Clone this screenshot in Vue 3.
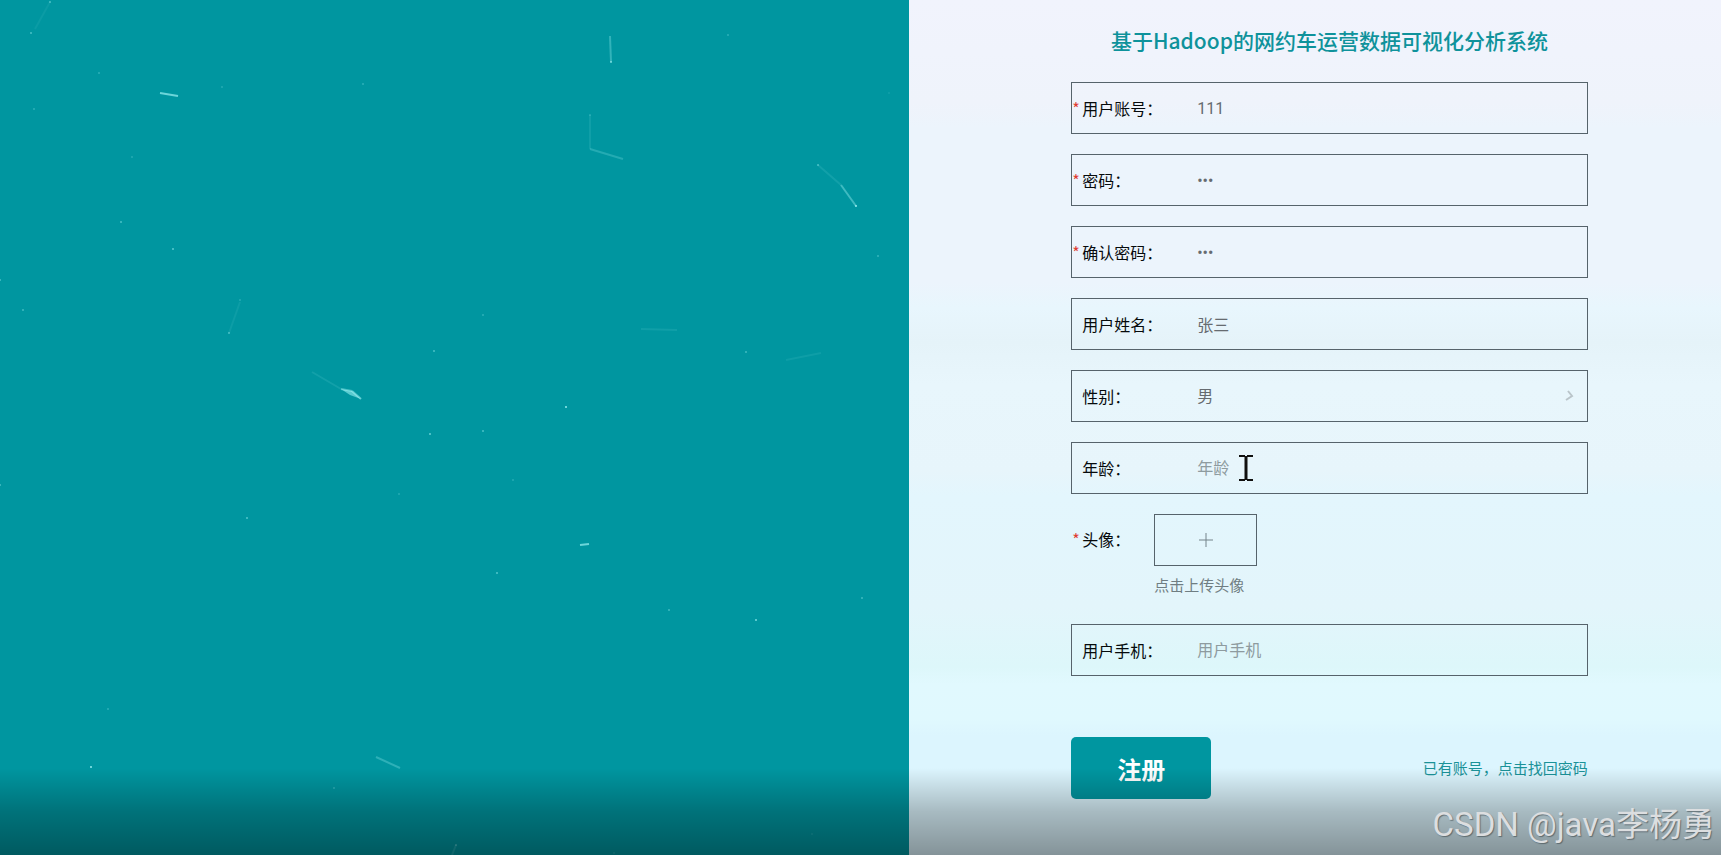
<script setup>
import { ref } from 'vue'

const fields = ref([
  { id: 'account', label: '用户账号', type: 'text', required: true, value: '111' },
  { id: 'password', label: '密码', type: 'password', required: true, value: '111' },
  { id: 'password2', label: '确认密码', type: 'password', required: true, value: '111' },
  { id: 'realname', label: '用户姓名', type: 'text', required: false, value: '张三' },
  { id: 'gender', label: '性别', type: 'select', required: false, value: '男', options: ['男', '女'] },
  { id: 'age', label: '年龄', type: 'text', required: false, value: '' },
  { id: 'avatar', label: '头像', type: 'upload', required: true, value: '' },
  { id: 'phone', label: '用户手机', type: 'text', required: false, value: '' }
])

// [x, y, opacity]
const dots = [
  [50, 2, 0.4], [31, 33, 0.4], [99, 73, 0.25], [34, 109, 0.25], [222, 87, 0.2], [363, 84, 0.25],
  [132, 157, 0.2], [121, 222, 0.4], [173, 249, 0.5], [0, 280, 0.4], [23, 310, 0.35], [229, 333, 0.4],
  [240, 300, 0.2], [434, 351, 0.4], [728, 35, 0.25], [611, 62, 0.6], [818, 165, 0.4], [856, 206, 0.8],
  [878, 256, 0.3], [483, 315, 0.25], [746, 352, 0.35], [566, 407, 0.8], [889, 93, 0.1], [590, 115, 0.2],
  [430, 434, 0.55], [0, 485, 0.4], [247, 518, 0.45], [399, 494, 0.2], [108, 709, 0.25], [91, 767, 0.8],
  [334, 788, 0.25], [456, 845, 0.35], [483, 431, 0.4], [513, 480, 0.2], [497, 573, 0.45], [669, 610, 0.35],
  [756, 620, 0.65], [862, 598, 0.35], [812, 834, 0.12], [614, 853, 0.15]
]

// [x1, y1, x2, y2, opacity]
const lines = [
  [50, 2, 35, 29, 0.06], [160, 93, 178, 96, 0.6], [240, 302, 229, 333, 0.07], [312, 372, 341, 389, 0.1],
  [610, 36, 611, 62, 0.28], [590, 115, 590, 149, 0.09], [590, 149, 623, 159, 0.2], [818, 165, 841, 185, 0.1],
  [841, 185, 856, 206, 0.35], [641, 329, 677, 330, 0.09], [786, 360, 821, 353, 0.08], [376, 757, 400, 768, 0.25],
  [580, 545, 589, 544, 0.6], [456, 845, 452, 855, 0.15], [341, 389, 352, 391, 0.4], [352, 391, 361, 399, 0.5]
]
</script>

<template>
  <main class="page">
    <section class="banner" aria-hidden="true">
      <svg class="particles" viewBox="0 0 910 855" preserveAspectRatio="xMinYMin slice">
        <line v-for="(l, i) in lines" :key="'l' + i" :x1="l[0]" :y1="l[1]" :x2="l[2]" :y2="l[3]" :stroke-opacity="l[4]" />
        <circle v-for="(d, i) in dots" :key="'d' + i" :cx="d[0]" :cy="d[1]" r="1" :fill-opacity="d[2]" />
        <path d="M341 389 L352 391 L361 399 L350 395 Z" fill-opacity="0.5" />
      </svg>
    </section>

    <section class="panel">
      <form class="form" @submit.prevent>
        <h1 class="title">基于Hadoop的网约车运营数据可视化分析系统</h1>

        <div v-for="f in fields" :key="f.id" class="row" :class="{ plain: f.type === 'upload' }">
          <span class="star">{{ f.required ? '*' : '' }}</span>
          <label class="label" :for="f.id">{{ f.label }}：</label>

          <template v-if="f.type === 'select'">
            <select :id="f.id" v-model="f.value" class="control">
              <option v-for="o in f.options" :key="o">{{ o }}</option>
            </select>
            <svg class="chevron" width="10" height="12" viewBox="0 0 10 12">
              <path d="M3 1 L7 6 L1 10" />
            </svg>
          </template>

          <div v-else-if="f.type === 'upload'" class="upload">
            <button :id="f.id" type="button" class="upload-box" aria-label="上传头像">
              <svg width="14" height="14" viewBox="0 0 14 14">
                <path d="M7 0 V14 M0 7 H14" />
              </svg>
            </button>
            <span class="tip">点击上传头像</span>
          </div>

          <input v-else :id="f.id" v-model="f.value" class="control" :type="f.type" :placeholder="f.label" autocomplete="off" />

          <svg v-if="f.id === 'age'" class="caret" width="14" height="26" viewBox="0 0 14 26">
            <path d="M0 1 H6 M8 1 H14 M0 25 H6 M8 25 H14" />
            <path class="stem" d="M7 1 V25" />
          </svg>
        </div>

        <div class="actions">
          <button type="submit" class="submit">注册</button>
          <a class="link" href="#login">已有账号，点击找回密码</a>
        </div>
      </form>
    </section>

    <div class="shade"></div>
    <div class="watermark">CSDN @java李杨勇</div>
  </main>
</template>

<style>
body {
  margin: 0;
}
</style>

<style scoped>
.page {
  position: relative;
  display: flex;
  min-height: 100vh;
  overflow: hidden;
  font-family: "Noto Sans CJK SC", "Noto Sans", sans-serif;
}

.banner {
  position: relative;
  flex: 0 0 52.8%;
  background: #0096a0;
}

.particles {
  position: absolute;
  inset: 0;
  width: 100%;
  height: 100%;
  fill: #b4ffff;
  stroke: none;
}

.particles line {
  stroke: #b4ffff;
  stroke-width: 2;
}

.panel {
  flex: 1;
  box-sizing: border-box;
  background: linear-gradient(
    #f1f3fd 0%, #eff3fb 12%, #ecf4fc 15%, #ecf4fc 33%, #e8f6fd 36%, #e5f3f9 40%, #e8f6fc 45%,
    #e7f5fb 55%, #e3f6fd 58%, #e3f5fb 71%, #ddf7fa 78%, #e1f9fe 80%, #e0f9fe 84%, #dcf5fe 86%, #dcf5fe 100%
  );
}

.form {
  display: flex;
  flex-direction: column;
  gap: 20px;
  width: 63.6%;
  margin-left: 20%;
  padding-top: 25px;
}

.title {
  margin: 0 0 7px;
  font-size: 21px;
  font-weight: 500;
  line-height: 30px;
  text-align: center;
  color: #0e929b;
}

.row {
  position: relative;
  display: flex;
  align-items: stretch;
  box-sizing: border-box;
  min-height: 52px;
  border: 1px solid #56636b;
}

.row.plain {
  border-color: transparent;
  margin: -1px 0;
}

.star {
  width: 10px;
  line-height: 50px;
  font-size: 16px;
  color: #e03c31;
}

.label {
  width: 105px;
  font-size: 16px;
  line-height: 50px;
  color: #060a0c;
}

.control {
  flex: 1;
  min-width: 0;
  height: 50px;
  box-sizing: border-box;
  padding: 0 10px;
  border: 0;
  outline: 0;
  appearance: none;
  background: transparent;
  font-family: Roboto, "Noto Sans CJK SC", sans-serif;
  font-size: 16px;
  color: #666b70;
}

.control::placeholder {
  color: #8e9b9f;
}

.chevron {
  position: absolute;
  right: 12px;
  top: 19px;
  fill: none;
  stroke: #bac5ca;
  stroke-width: 2;
}

.caret {
  position: absolute;
  left: 167px;
  top: 12px;
  fill: none;
  stroke: #10100f;
  stroke-width: 2;
}

.caret .stem {
  stroke-width: 3;
}

.plain .label {
  width: 72px;
}

.upload {
  display: flex;
  flex-direction: column;
  gap: 8px;
  margin-bottom: 8px;
}

.upload-box {
  display: flex;
  align-items: center;
  justify-content: center;
  width: 103px;
  height: 52px;
  padding: 0;
  border: 1px solid #56636b;
  background: transparent;
}

.upload-box path {
  fill: none;
  stroke: #74838a;
  stroke-width: 1;
}

.tip {
  font-size: 15px;
  line-height: 22px;
  color: #6f7d82;
}

.actions {
  display: flex;
  align-items: center;
  justify-content: space-between;
  margin-top: 41px;
}

.submit {
  width: 140px;
  height: 62px;
  padding: 0;
  border: 0;
  border-radius: 5px;
  background: #0096a0;
  font-family: inherit;
  font-size: 24px;
  font-weight: 700;
  color: #fff;
}

.link {
  font-size: 15px;
  line-height: 22px;
  text-decoration: none;
  color: #1a9298;
}

.shade {
  position: absolute;
  left: 0;
  right: 0;
  bottom: 0;
  height: 87px;
  background: linear-gradient(rgba(0, 0, 0, 0), rgba(0, 0, 0, 0.24) 50%, rgba(0, 0, 0, 0.4));
  pointer-events: none;
}

.watermark {
  position: absolute;
  right: 6px;
  bottom: 6px;
  font-family: Roboto, "Noto Sans CJK SC", sans-serif;
  font-size: 33px;
  line-height: 48px;
  color: #dcdee0;
  text-shadow: 1px 1px 1px rgba(60, 70, 74, 0.6);
  pointer-events: none;
}
</style>
